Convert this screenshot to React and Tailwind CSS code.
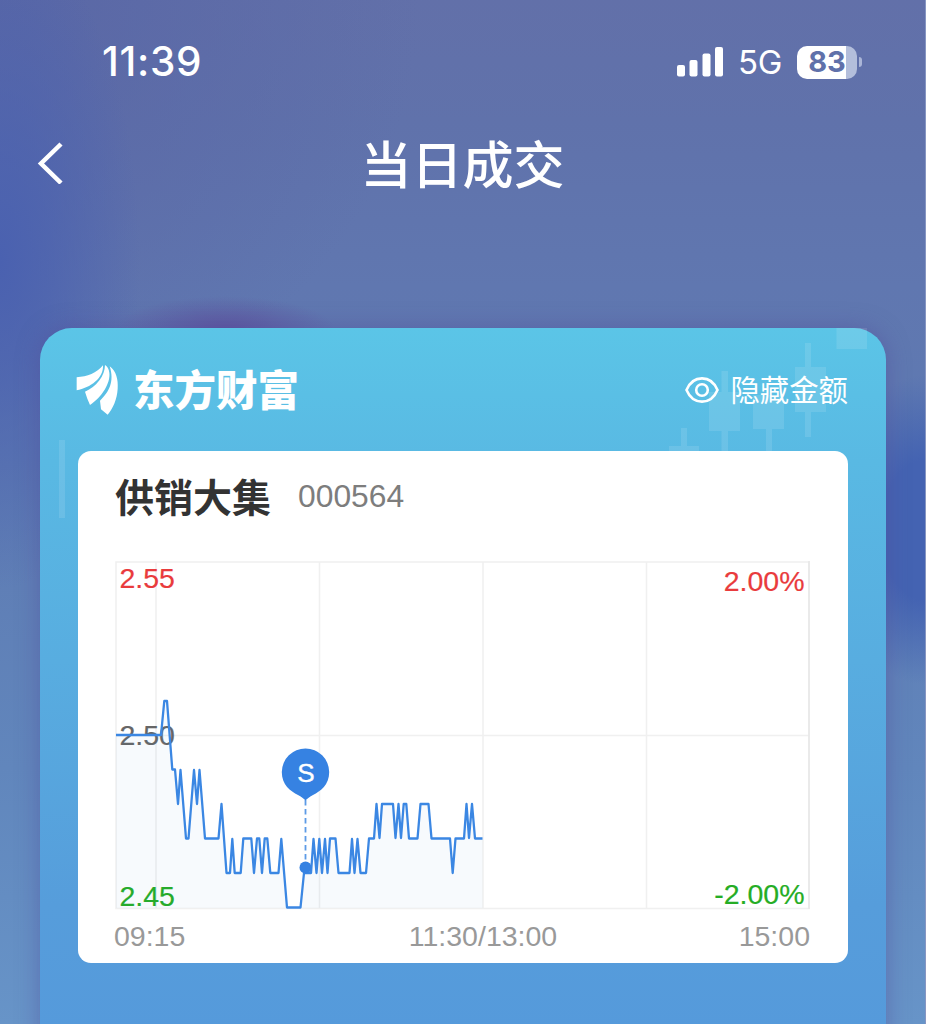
const PRICE_LINE =
  '116,735 161,735 164.3,701 167,701 172.3,769.5 175,769.5 178,804 180.5,770 186,838.5 188.5,838.5 194,770 197,804 199.5,770 205,838.5 218.5,838.5 221.5,804 226.5,873 230,873 232.3,839 234.7,873 240.7,873 243.3,838.5 251.3,838.5 254,873 257,838.5 259.3,838.5 262,873 264.7,838.5 267.3,838.5 270.3,873 278.5,873 281.3,839 287,907.5 300.5,907.5 304,873 311,873 313.5,839 316.5,873 319.3,839 322,873 325,839 327.5,873 330,838.5 335.5,838.5 338.5,873 349.5,873 352,839 354.5,873 357.5,839 360.5,873 366,873 369,838.5 374,838.5 376.5,804 379.5,838 382,804 393,804 395.5,838 398.5,804 401,838 403.7,804 406.3,804 409,838.5 417.5,838.5 420.5,804 428.5,804 431.5,838.5 450,838.5 452.7,873 455.5,838.5 464,838.5 466.5,804 469,838 472,804 475,838.5 482.5,838.5';

function StatusBar() {
  return (
    <header className="flex h-[124px] items-center justify-between pl-[102px] pr-[63px]">
      <span className="pt-[1px] font-['Inter',sans-serif] text-[40.5px] font-medium leading-none tracking-[0.7px]">11:39</span>
      <div className="flex items-center">
        <svg width="48" height="32" viewBox="0 0 48 32" fill="white">
          <rect x="1" y="19" width="8" height="11.500" rx="2" />
          <rect x="13.500" y="14" width="8" height="16.500" rx="2" />
          <rect x="26.500" y="7.500" width="8" height="23" rx="2" />
          <rect x="39" y="1" width="8" height="29.500" rx="2" />
        </svg>
        <span className="ml-[14px] pt-[1px] font-['Inter',sans-serif] text-[33px] leading-none tracking-[-0.4px]">5G</span>
        <div className="ml-[15px] flex h-[33px] w-[60px] items-center justify-center rounded-[10px] bg-[linear-gradient(90deg,#fff_0_49px,#b3bedb_49px)] font-['Inter',sans-serif] text-[29px] font-bold leading-none text-[#6071aa]">
          <span className="pb-[1px]">83</span>
        </div>
        <div className="ml-[2px] h-[10px] w-[3px] rounded-r-full bg-[#aab5d7]" />
      </div>
    </header>
  );
}

function BrandLogo() {
  return (
    <svg width="44" height="52" viewBox="50 70 132 156" fill="white">
      <path d="M52 110C84 108 112 97 131 74C133 113 94 141 52 149Z" />
      <path d="M137 73C137 105 111 139 77 153C81 167 86 180 92 193C127 169 154 128 150 96C149 86 144 77 137 73Z" />
      <path d="M151 77C171 91 177 118 175 144C173 177 161 202 145 222L125 206L122 180C149 155 166 122 151 77Z" />
    </svg>
  );
}

function CandleBackdrop() {
  return (
    <svg className="absolute left-0 top-0" width="846" height="200" viewBox="40 328 846 200" fill="white" fillOpacity=".11">
      <path d="M836.500 328H867V349H836.500ZM805 343H811V367H826V412H811V437H805V412H795V367H805ZM721.500 371H728V392H740V431H728V460H721.500V431H709V392H721.500ZM753 395H784V429H772V460H766V429H753ZM681 428H687V446H699V460H669V446H681ZM59 440H65V518H59Z" />
    </svg>
  );
}

function IntradayChart() {
  return (
    <svg className="block" width="702" height="352" viewBox="112 560 702 352" fontFamily="'Liberation Sans', Arial, sans-serif" fontSize="28.500">
      <g fill="none" stroke="#f0f0f0" strokeWidth="1.600">
        <path d="M116 562H809V908.500H116ZM116 735.500H809M156 562V908.500M319.500 562V908.500M483 562V908.500M646.500 562V908.500" />
      </g>
      <path d="M809 561V909" stroke="#e8e8e8" strokeWidth="1.600" />
      <g strokeWidth=".2">
        <text x="119.500" y="587.500" fill="#e93b3d" stroke="#e93b3d">2.55</text>
        <text x="119.500" y="744.500" fill="#666" stroke="#666">2.50</text>
        <text x="119.500" y="905.500" fill="#25ad25" stroke="#25ad25">2.45</text>
        <text x="804.500" y="590.500" fill="#e93b3d" stroke="#e93b3d" textAnchor="end">2.00%</text>
        <text x="804.500" y="903.500" fill="#25ad25" stroke="#25ad25" textAnchor="end">-2.00%</text>
      </g>
      <polygon points={`116,908 ${PRICE_LINE} 482.5,908`} fill="#3b95d8" fillOpacity=".045" />
      <polyline points={PRICE_LINE} fill="none" stroke="#3b87e3" strokeWidth="2.300" strokeLinejoin="round" />
      <path d="M305.500 800V864" stroke="#5d9be6" strokeWidth="1.800" strokeDasharray="5.500 3.500" />
      <circle cx="305.500" cy="867.500" r="6" fill="#3682e2" />
      <path d="M305.500 748.500A23.700 23.700 0 0 1 329.200 772C329.200 785 320.500 791 313 795C309 797.200 307 799 305.500 800.500C304 799 302 797.200 298 795C290.500 791 281.800 785 281.800 772A23.700 23.700 0 0 1 305.500 748.500Z" fill="#3682e2" />
      <text x="306" y="781.500" fill="#fff" fontSize="26" textAnchor="middle" stroke="#fff" strokeWidth=".4">S</text>
    </svg>
  );
}

function StockCard() {
  return (
    <section className="relative mx-[38px] h-[512px] rounded-[13px] bg-white pt-[21px]">
      <div className="flex h-[46px] items-center pl-[37px]">
        <h2 className="text-[39px] font-bold leading-none text-[#333]">供销大集</h2>
        <span className="ml-[27px] pt-[3px] font-['Liberation_Sans',Arial,sans-serif] text-[31.8px] leading-none text-[#7d7d7d]">000564</span>
      </div>
      <div className="ml-[34px] mt-[42px]">
        <IntradayChart />
      </div>
      <div className="ml-[36px] mr-[38px] mt-[8px] grid grid-cols-[1fr_auto_1fr] font-['Liberation_Sans',Arial,sans-serif] text-[28.5px] leading-[32px] text-[#999]">
        <span>09:15</span>
        <span className="pl-[42px] pr-0 text-center">11:30/13:00</span>
        <span className="text-right">15:00</span>
      </div>
    </section>
  );
}

export default function App() {
  return (
    <div className="h-[1024px] w-[926px] overflow-hidden border-r border-[#8796c2] bg-[radial-gradient(ellipse_110px_34px_at_225px_330px,#5d559f_0%,transparent_100%),radial-gradient(ellipse_140px_330px_at_0px_260px,#4a61b0_0%,#4a61b0b0_35%,transparent_100%),radial-gradient(ellipse_100px_155px_at_926px_530px,#4463b2_45%,transparent_100%),radial-gradient(ellipse_420px_420px_at_0px_0px,#5967a6_0%,transparent_100%),linear-gradient(180deg,#6270a9_0%,#6072ab_12%,#6077b0_28%,#5e7ab2_45%,#6186bc_75%,#6794c8_100%)] font-['Noto_Sans_CJK_SC',sans-serif] text-white">
      <StatusBar />
      <nav className="grid h-[80px] grid-cols-[1fr_auto_1fr] items-center">
        <svg className="-mt-[2px] ml-[36px]" width="28" height="42" viewBox="0 0 28 42" fill="none" stroke="white" strokeWidth="4.500">
          <path d="M25 2L5 21.500L25 41" />
        </svg>
        <h1 className="pb-[4px] text-[51px] font-medium leading-none">当日成交</h1>
      </nav>
      <main className="relative ml-[40px] mt-[124px] h-[740px] w-[846px] rounded-t-[32px] bg-[linear-gradient(180deg,#5bc5e7_0%,#59b9e3_18%,#58ade0_45%,#569ddb_78%,#5599db_100%)] shadow-[0_0_22px_rgba(82,76,155,0.5)]">
        <CandleBackdrop />
        <div className="relative flex h-[123px] items-center justify-between pl-[36px] pr-[38px]">
          <div className="flex items-center">
            <BrandLogo />
            <span className="ml-[13px] pb-[2px] text-[41.5px] font-black leading-none">东方财富</span>
          </div>
          <div className="flex items-center gap-[11px]">
            <svg width="34" height="28" viewBox="0 0 34 28" fill="none" stroke="white" strokeWidth="2.600">
              <path d="M1.500 14C8 -1.500 26 -1.500 32.500 14C26 29.500 8 29.500 1.500 14Z" />
              <circle cx="17" cy="14" r="5.800" />
            </svg>
            <span className="pb-[1px] text-[29.4px] font-normal leading-none">隐藏金额</span>
          </div>
        </div>
        <StockCard />
      </main>
    </div>
  );
}
